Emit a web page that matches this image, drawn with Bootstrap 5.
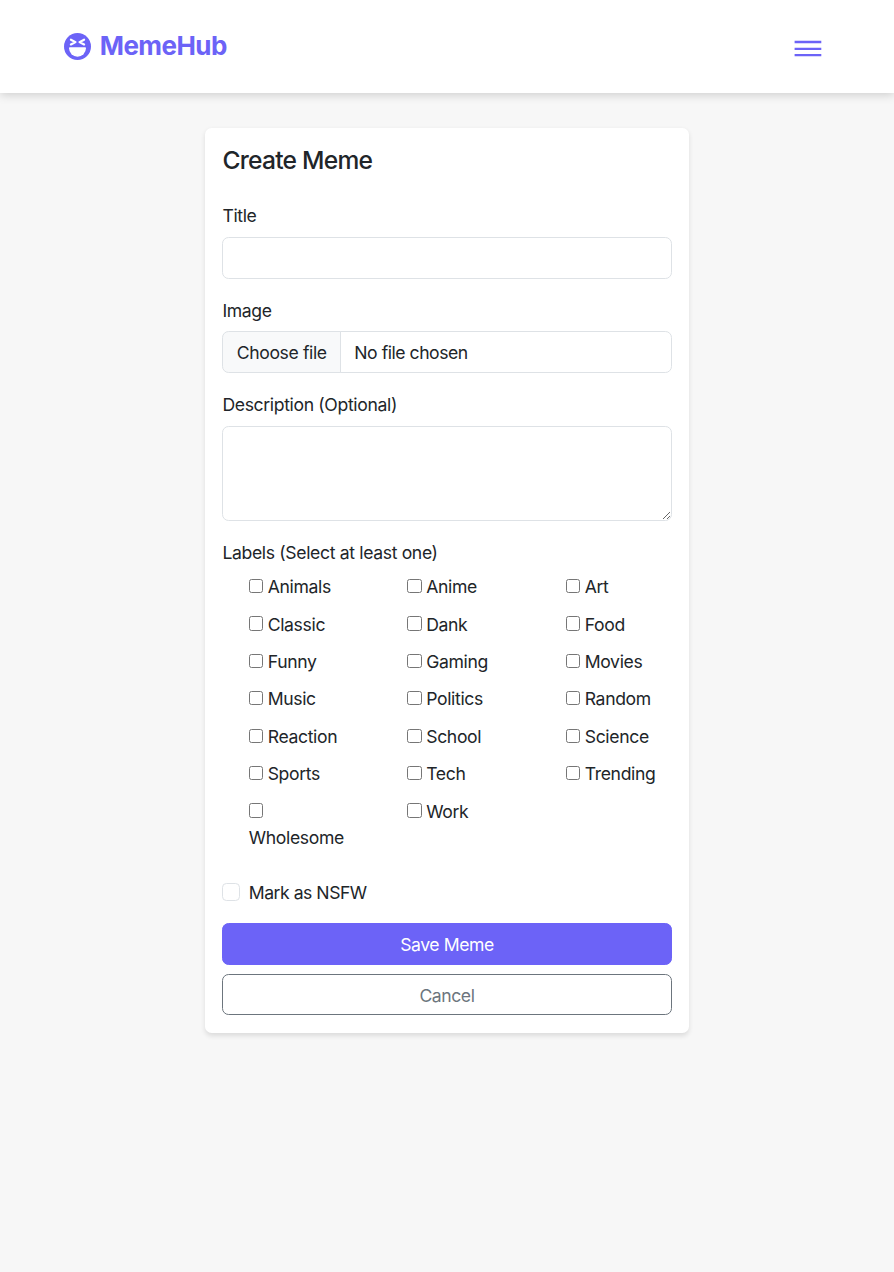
<!DOCTYPE html>
<html lang="en">
<head>
<meta charset="utf-8">
<meta name="viewport" content="width=device-width, initial-scale=1">
<title>MemeHub</title>
<link href="https://cdn.jsdelivr.net/npm/bootstrap@5.3.0/dist/css/bootstrap.min.css" rel="stylesheet">
<style>
html{font-size:17.6px}
body{min-height:100vh;font-family:Inter,"Liberation Sans",sans-serif;font-size:17.6px;letter-spacing:-.02em;background:#f7f7f7;color:#212529}
.btn,.form-control,.input-group-text{letter-spacing:inherit;font-size:inherit;border-radius:6.6px}
.site-nav{height:92.5px;padding:0 72px 0 64px;background:#fff;box-shadow:0 2px 9px rgba(0,0,0,.17)}
.brand-name{color:#6c63f7;font-size:26px;font-weight:700;line-height:1;letter-spacing:-.022em}
.menu-btn{line-height:0}
.meme-card{width:484.4px;margin-top:35px;border:0;border-radius:6.6px;box-shadow:0 2.2px 5px rgba(0,0,0,.11)}
.meme-card h1{font-size:24.6px;line-height:30.2px;letter-spacing:-.03em}
.form-control,.input-group-text{border-color:#dee2e6}
.form-control{height:41.8px;padding-top:7.6px}
textarea.form-control{height:94.6px}
.form-label{padding-top:1.3px;margin-bottom:7.5px}
.file-button{background:#f8f9fa;padding:1.4px 13.4px 0;letter-spacing:-.022em}
.file-name{letter-spacing:-.026em}
.label-check{min-height:26.4px;padding:.9px 0 0 26.4px;margin-bottom:10.1px}
.label-check input{width:14.3px;height:14.3px;margin:0;vertical-align:0;appearance:none;background:#fff;border:1px solid #767676;border-radius:2.5px}
.label-check input:checked{background:#6c63f7}
.nsfw{padding-top:.8px;margin-bottom:16.8px;letter-spacing:-.027em}
.nsfw .form-check-input{width:17.6px;height:17.6px;border-color:#dee2e6;margin-top:3.6px}
.meme-card .btn{height:41.8px;padding-top:2.6px;padding-bottom:0;letter-spacing:-.025em}
.btn-save{background:#6c63f7;border-color:#6c63f7;color:#fff}
</style>
</head>
<body>
<nav class="site-nav d-flex align-items-center justify-content-between">
  <a class="d-flex align-items-center text-decoration-none" href="#">
    <svg class="me-2" width="27" height="27" viewBox="0 0 16 16"><circle cx="8" cy="8" r="8" fill="#6c63f7"/><path d="M3.4 8.5h9.2c.3 0 .4.2.4.5a5 5 0 0 1-10 0c0-.3.1-.5.4-.5z" fill="#fff"/><path d="M4.1 4 6.8 5.4 4.1 6.8M11.9 4 9.2 5.4 11.9 6.8" fill="none" stroke="#fff" stroke-width="1.3" stroke-linecap="round" stroke-linejoin="round"/></svg>
    <span class="brand-name">MemeHub</span>
  </a>
  <button class="menu-btn btn border-0 p-0 pt-1" type="button" aria-label="Menu">
    <svg width="28" height="17" viewBox="0 0 28 17" stroke="#6c63f7" stroke-width="2.3"><path d="M0.6 2H27.3M0.6 8.8H27.3M0.6 15.2H27.3"/></svg>
  </button>
</nav>
<main class="card meme-card mx-auto">
  <form class="card-body p-3">
    <h1 class="mb-4 fw-medium">Create Meme</h1>
    <div class="mb-3">
      <label class="form-label" for="title">Title</label>
      <input class="form-control" id="title" type="text">
    </div>
    <div class="mb-3">
      <label class="form-label">Image</label>
      <div class="input-group">
        <span class="input-group-text file-button">Choose file</span>
        <div class="form-control file-name">No file chosen</div>
      </div>
    </div>
    <div class="mb-3">
      <label class="form-label" for="desc">Description (Optional)</label>
      <textarea class="form-control" id="desc" rows="3"></textarea>
    </div>
    <div class="mb-3">
      <label class="form-label d-block">Labels (Select at least one)</label>
      <div class="row">
        <div class="col-4"><div class="label-check"><input type="checkbox"> <label>Animals</label></div></div>
        <div class="col-4"><div class="label-check"><input type="checkbox"> <label>Anime</label></div></div>
        <div class="col-4"><div class="label-check"><input type="checkbox"> <label>Art</label></div></div>
        <div class="col-4"><div class="label-check"><input type="checkbox"> <label>Classic</label></div></div>
        <div class="col-4"><div class="label-check"><input type="checkbox"> <label>Dank</label></div></div>
        <div class="col-4"><div class="label-check"><input type="checkbox"> <label>Food</label></div></div>
        <div class="col-4"><div class="label-check"><input type="checkbox"> <label>Funny</label></div></div>
        <div class="col-4"><div class="label-check"><input type="checkbox"> <label>Gaming</label></div></div>
        <div class="col-4"><div class="label-check"><input type="checkbox"> <label>Movies</label></div></div>
        <div class="col-4"><div class="label-check"><input type="checkbox"> <label>Music</label></div></div>
        <div class="col-4"><div class="label-check"><input type="checkbox"> <label>Politics</label></div></div>
        <div class="col-4"><div class="label-check"><input type="checkbox"> <label>Random</label></div></div>
        <div class="col-4"><div class="label-check"><input type="checkbox"> <label>Reaction</label></div></div>
        <div class="col-4"><div class="label-check"><input type="checkbox"> <label>School</label></div></div>
        <div class="col-4"><div class="label-check"><input type="checkbox"> <label>Science</label></div></div>
        <div class="col-4"><div class="label-check"><input type="checkbox"> <label>Sports</label></div></div>
        <div class="col-4"><div class="label-check"><input type="checkbox"> <label>Tech</label></div></div>
        <div class="col-4"><div class="label-check"><input type="checkbox"> <label>Trending</label></div></div>
        <div class="col-4"><div class="label-check"><input type="checkbox"> <label>Wholesome</label></div></div>
        <div class="col-4"><div class="label-check"><input type="checkbox"> <label>Work</label></div></div>
      </div>
    </div>
    <div class="form-check nsfw">
      <input class="form-check-input" type="checkbox" id="nsfw">
      <label class="form-check-label" for="nsfw">Mark as NSFW</label>
    </div>
    <div class="d-grid gap-2">
      <button class="btn btn-save" type="button">Save Meme</button>
      <button class="btn btn-outline-secondary" type="button">Cancel</button>
    </div>
  </form>
</main>
</body>
</html>
